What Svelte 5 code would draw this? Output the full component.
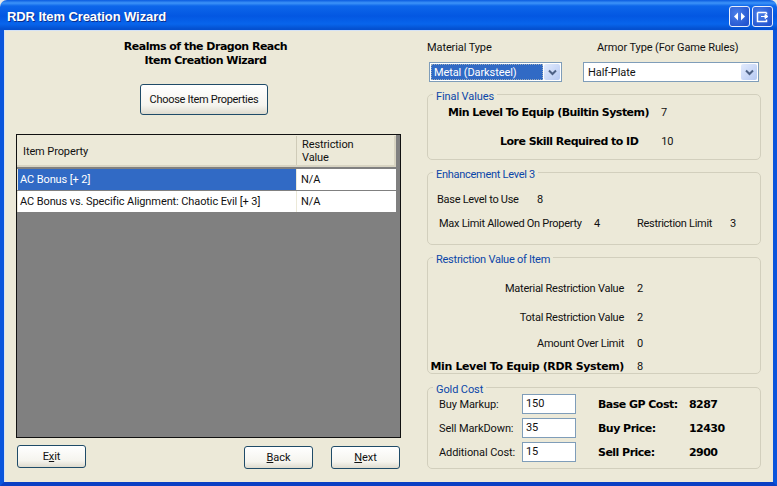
<script>
  const rows = [
    { name: 'AC Bonus [+ 2]', value: 'N/A', selected: true },
    { name: 'AC Bonus vs. Specific Alignment: Chaotic Evil [+ 3]', value: 'N/A', selected: false }
  ];
  const gold = [
    { label: 'Buy Markup:', val: '150', blabel: 'Base GP Cost:', num: '8287' },
    { label: 'Sell MarkDown:', val: '35', blabel: 'Buy Price:', num: '12430' },
    { label: 'Additional Cost:', val: '15', blabel: 'Sell Price:', num: '2900' }
  ];
</script>

<div class="window">
  <header class="titlebar">
    <span class="title">RDR Item Creation Wizard</span>
    <div class="tbtns">
      <div class="tbtn">
        <svg width="19" height="19" viewBox="0 0 19 19"><path d="M8 5.500v8L4 9.500zM11 5.500v8l4-4z" fill="#fff"/></svg>
      </div>
      <div class="tbtn">
        <svg width="19" height="19" viewBox="0 0 19 19"><path d="M4.500 5.500h9M4.500 5.500v9h9v-2M13.500 5.500v2" fill="none" stroke="#fff" stroke-width="1.500"/><path d="M8 9.500h6M12 7.500l3 2-3 2z" fill="#fff" stroke="#fff"/></svg>
      </div>
    </div>
  </header>
  <main class="client">
    <section class="left">
      <h1 class="heading">Realms of the Dragon Reach<br />Item Creation Wizard</h1>
      <div class="choose-row"><button class="btn choose">Choose Item Properties</button></div>
      <div class="grid">
        <div class="ghead">
          <div class="hcell c1">Item Property</div>
          <div class="hcell c2">Restriction<br />Value</div>
        </div>
        {#each rows as r}
          <div class="grow">
            <div class="cell c1" class:sel={r.selected}>{r.name}</div>
            <div class="cell c2">{r.value}</div>
          </div>
        {/each}
      </div>
      <div class="nav">
        <button class="btn navbtn exit">E<u>x</u>it</button>
        <div class="navright">
          <button class="btn navbtn"><u>B</u>ack</button>
          <button class="btn navbtn"><u>N</u>ext</button>
        </div>
      </div>
    </section>
    <section class="right">
      <div class="selects">
        <div class="selcol first">
          <div class="sellabel">Material Type</div>
          <div class="combo">
            <span class="comboval hl">Metal (Darksteel)</span>
            <span class="arrow"><svg width="9" height="7" viewBox="0 0 9 7"><path d="M1 1.500l3.500 3.500 3.500-3.500" fill="none" stroke="#4d6185" stroke-width="2"/></svg></span>
          </div>
        </div>
        <div class="selcol second">
          <div class="sellabel">Armor Type (For Game Rules)</div>
          <div class="combo">
            <span class="comboval">Half-Plate</span>
            <span class="arrow"><svg width="9" height="7" viewBox="0 0 9 7"><path d="M1 1.500l3.500 3.500 3.500-3.500" fill="none" stroke="#4d6185" stroke-width="2"/></svg></span>
          </div>
        </div>
      </div>

      <fieldset class="group g1">
        <legend>Final Values</legend>
        <div class="line l1"><b>Min Level To Equip (Builtin System)</b><span class="v">7</span></div>
        <div class="line l2"><b>Lore Skill Required to ID</b><span class="v">10</span></div>
      </fieldset>

      <fieldset class="group g2">
        <legend>Enhancement Level 3</legend>
        <div class="line e1"><span class="base">Base Level to Use</span><span>8</span></div>
        <div class="line e2"><span class="maxl">Max Limit Allowed On Property</span><span class="four">4</span><span class="rl">Restriction Limit</span><span>3</span></div>
      </fieldset>

      <fieldset class="group g3">
        <legend>Restriction Value of Item</legend>
        <div class="rv r1"><span>Material Restriction Value</span><span>2</span></div>
        <div class="rv r2"><span>Total Restriction Value</span><span>2</span></div>
        <div class="rv r3"><span>Amount Over Limit</span><span>0</span></div>
        <div class="rv r4"><b>Min Level To Equip (RDR System)</b><span>8</span></div>
      </fieldset>

      <fieldset class="group g4">
        <legend>Gold Cost</legend>
        {#each gold as g}
          <div class="gline">
            <span class="glabel">{g.label}</span>
            <span class="ginput">{g.val}</span>
            <b class="gb">{g.blabel}</b>
            <b class="gnum">{g.num}</b>
          </div>
        {/each}
      </fieldset>
    </section>
  </main>
</div>

<style>
  :global(body) { margin: 0; background: #e8e8e8; }
  .window {
    width: 777px; height: 486px; display: flex; flex-direction: column; overflow: hidden;
    font-family: Roboto, "Liberation Sans", sans-serif; font-size: 11px; letter-spacing: -0.1px; color: #111;
    border-radius: 7px 7px 0 0;
  }
  .titlebar {
    height: 30px; flex: none; display: flex; align-items: center; justify-content: space-between;
    padding: 0 4px 0 7px; box-sizing: border-box;
    background: linear-gradient(#0a5be0 0, #3d94f8 3px, #0d66ea 6px, #0357e2 16px, #0865ec 24px, #0450cf 29px);
  }
  .title { color: #fff; font: bold 13px "Liberation Sans", sans-serif; letter-spacing: -0.08px; text-shadow: 1px 1px 0 #0b2f8c; padding-top: 3px; }
  .tbtns { display: flex; gap: 2px; padding-top: 3px; }
  .tbtn {
    width: 19px; height: 19px; border: 1px solid #e8eefc; border-radius: 3px; box-sizing: content-box;
    background: radial-gradient(circle at 35% 35%, #4a7fe8, #2455d0 80%);
    display: flex;
  }
  .client {
    flex: 1; display: flex; background: #ece9d8; min-height: 0;
    border-left: 4px solid #0a55dc; border-right: 4px solid #0a55dc; border-bottom: 4px solid #0a3fc4;
    box-sizing: border-box; box-shadow: inset 1px 1px 0 #d4e2f6;
  }
  .left { width: 404px; flex: none; box-sizing: border-box; padding: 10px 0 0 12px; }
  .heading { margin: 0; width: 379px; text-align: center; font: bold 11px/14px "DejaVu Sans", sans-serif; letter-spacing: -0.5px; color: #000; }
  .choose-row { margin: 16px 0 0 124px; }
  .btn {
    display: block; box-sizing: border-box; font: 11px Roboto, sans-serif; letter-spacing: -0.1px; color: #111; padding: 0;
    border: 1px solid #1f4b68; border-radius: 3px;
    background: linear-gradient(#fff, #f5f4ee 70%, #dedbce);
  }
  .choose { width: 128px; height: 31px; letter-spacing: -0.3px; }
  .grid {
    margin-top: 19px; width: 385px; height: 304px; box-sizing: border-box;
    background: #808080; border: 1px solid #111;
  }
  .ghead { width: 379px; height: 32px; display: flex; background: #ece9d8; border-top: 1px solid #ece9d8; box-sizing: border-box; border-bottom: 2px solid #d8d4c2; margin-bottom: 2px; }
  .hcell { box-sizing: border-box; display: flex; align-items: center; line-height: 13px; white-space: nowrap; }
  .hcell.c1 { width: 280px; padding-left: 6px; padding-top: 1px; border-right: 1px solid #cfcbb8; }
  .hcell.c2 { width: 99px; display: block; padding: 2px 0 0 5px; border-right: 2px solid #d8d4c2; }
  .grow { display: flex; height: 21px; margin-bottom: 1px; background: #ece9d8; width: 379px; }
  .cell { background: #fff; box-sizing: border-box; line-height: 22px; white-space: nowrap; flex: none; }
  .cell.c1 { width: 278px; margin-left: 1px; margin-right: 1px; padding-left: 2px; }
  .cell.c2 { width: 99px; padding-left: 4px; }
  .cell.sel { background: #316ac5; color: #fff; }
  .nav { display: flex; justify-content: space-between; margin: 7px 0 0 1px; width: 383px; }
  .navright { display: flex; gap: 18px; margin-top: 1px; }
  .navbtn { width: 69px; height: 23px; }
  .right { flex: 1; padding: 11px 0 0 19px; box-sizing: border-box; }
  .selects { display: flex; height: 36px; }
  .selcol.first { width: 156px; }
  .sellabel { height: 21px; line-height: 14px; white-space: nowrap; }
  .second .sellabel { margin-left: 14px; }
  .first .combo { margin-left: 2px; width: 133px; }
  .second .combo { width: 176px; }
  .combo {
    box-sizing: border-box; height: 20px; border: 1px solid #7f9db9; background: #fff; display: flex;
    padding: 1px;
  }
  .comboval { flex: 1; padding-left: 3px; line-height: 18px; }
  .comboval.hl { background: #316ac5; color: #fff; margin-right: 1px; border: 1px dotted #9ab; line-height: 15px; padding-left: 2px; }
  .arrow {
    width: 16px; flex: none; display: flex; align-items: center; justify-content: center;
    background: linear-gradient(135deg, #e2ebfd, #b6c9f2); border-radius: 2px;
  }
  .group {
    margin: 0; padding: 0; border: 1px solid #d2cfbd; border-radius: 5px; box-sizing: border-box;
    width: 334px; display: block; min-width: 0;
  }
  legend { color: #0b46a8; margin-left: 5px; padding: 0 3px; line-height: 13px; position: relative; top: 2px; }
  .g1 { height: 72px; margin-top: 11px; }
  .g2 { height: 79px; margin-top: 6px; letter-spacing: -0.28px; }
  .g3 { height: 123px; margin-top: 6px; letter-spacing: -0.25px; }
  .g4 { height: 88px; margin-top: 7px; }
  .line { display: flex; align-items: center; height: 14px; white-space: nowrap; }
  b { font: bold 11px "DejaVu Sans", sans-serif; letter-spacing: -0.53px; color: #000; }
  .l1 { margin: 4px 0 0 20px; }
  .l1 .v { margin-left: 12px; }
  .l2 { margin: 15px 0 0 72px; }
  .l2 .v { margin-left: 23px; }
  .e1 { margin: 13px 0 0 9px; }
  .base { width: 100px; }
  .e2 { margin: 10px 0 0 11px; }
  .maxl { width: 155px; }
  .four { width: 43px; }
  .rl { width: 93px; }
  .rv { display: grid; grid-template-columns: 196px auto; column-gap: 13px; height: 14px; line-height: 14px; }
  .rv span:first-child, .rv b { text-align: right; white-space: nowrap; }
  .r1 { margin-top: 18px; }
  .r2 { margin-top: 15px; }
  .r3 { margin-top: 12px; }
  .r4 { margin-top: 9px; }
  .r4 b { letter-spacing: -0.37px; }
  .gline { display: flex; align-items: center; height: 20px; margin-bottom: 4px; }
  .glabel { width: 83px; margin-left: 11px; white-space: nowrap; }
  .ginput { box-sizing: border-box; width: 54px; height: 20px; background: #fff; border: 1px solid #7f9db9; padding-left: 3px; line-height: 18px; }
  .gb { margin-left: 22px; width: 91px; white-space: nowrap; }
</style>
